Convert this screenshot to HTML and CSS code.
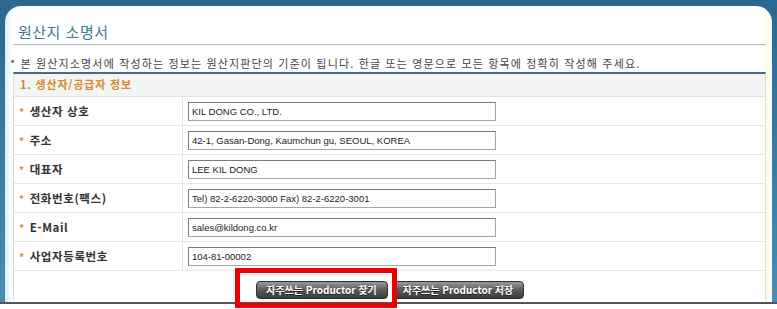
FILE: index.html
```html
<!DOCTYPE html>
<html lang="ko">
  <head>
    <meta charset="UTF-8" />
    <title>원산지 소명서</title>
    <link rel="stylesheet" href="styles.css">
  </head>
  <body>
    <div class="frame">
      <div class="panel">
        <h1 class="title">원산지 소명서</h1>
        <p class="note">* 본 원산지소명서에 작성하는 정보는 원산지판단의 기준이 됩니다. 한글 또는 영문으로 모든 항목에 정확히 작성해 주세요.</p>
        <div class="section">
          <div class="section-head">1. 생산자/공급자 정보</div>
          <div class="row">
            <div class="label"><span class="star">*</span>생산자 상호</div>
            <div class="field"><input type="text" value="KIL DONG CO., LTD." /></div>
          </div>
          <div class="row">
            <div class="label"><span class="star">*</span>주소</div>
            <div class="field"><input type="text" value="42-1, Gasan-Dong, Kaumchun gu, SEOUL, KOREA" /></div>
          </div>
          <div class="row">
            <div class="label"><span class="star">*</span>대표자</div>
            <div class="field"><input type="text" value="LEE KIL DONG" /></div>
          </div>
          <div class="row">
            <div class="label"><span class="star">*</span>전화번호(팩스)</div>
            <div class="field"><input type="text" value="Tel) 82-2-6220-3000 Fax) 82-2-6220-3001" /></div>
          </div>
          <div class="row">
            <div class="label"><span class="star">*</span>E-Mail</div>
            <div class="field"><input type="text" value="sales@kildong.co.kr" /></div>
          </div>
          <div class="row">
            <div class="label"><span class="star">*</span>사업자등록번호</div>
            <div class="field"><input type="text" value="104-81-00002" /></div>
          </div>
          <div class="buttons">
            <button type="button" class="btn">자주쓰는 Productor 찾기</button>
            <button type="button" class="btn">자주쓰는 Productor 저장</button>
          </div>
        </div>
      </div>
    </div>
    <div class="bottom-line"></div>
    <div class="highlight"></div>
  </body>
</html>
```

FILE: styles.css
```css
body {
  margin: 0;
  padding: 0;
  background-color: #fff;
  font-family: "Noto Sans CJK KR", "DejaVu Sans", sans-serif;
  color: #333;
}
.frame {
  background: linear-gradient(#2a6890, #4a8db0);
  padding: 6px 5px 0 5px;
}
.panel {
  background: linear-gradient(to right, #d4eef8 0, #f4fbfd 5px, #fff 8px, #fff 758px, #fdfbe8 762px, #fff 767px);
  border-radius: 16px 16px 0 0;
  padding: 0 6px 0 8px;
  height: 296px;
}
.title {
  margin: 0;
  padding: 17px 0 0 5px;
  height: 21px;
  font-size: 15px;
  font-weight: normal;
  line-height: 18px;
  letter-spacing: 0.5px;
  color: #3b7b8a;
  border-bottom: 1px solid #b3c4c4;
  box-shadow: 0 1px 0 #eef3f3;
}
.note {
  margin: 10px 0 0 -3px;
  height: 17px;
  font-size: 11px;
  line-height: 16px;
  letter-spacing: 1.15px;
  color: #444;
  white-space: nowrap;
}
.section {
  border-top: 2px solid #3f6f7c;
  border-left: 1px solid #dcdcdc;
  border-right: 1px solid #dcdcdc;
}
.section-head {
  height: 22px;
  line-height: 21px;
  padding-left: 6px;
  background-color: #f3f4f4;
  border-bottom: 1px solid #e4e4e4;
  color: #d78a2c;
  font-size: 11px;
  font-weight: bold;
  letter-spacing: 0.8px;
}
.row {
  display: flex;
  height: 28px;
  border-bottom: 1px solid #e6e6e6;
}
.label {
  width: 169px;
  border-right: 1px solid #e6e6e6;
  display: flex;
  align-items: center;
  padding-left: 5px;
  box-sizing: border-box;
  font-size: 11.5px;
  font-weight: bold;
  letter-spacing: 0.6px;
  color: #333;
}
.star {
  color: #e08a3a;
  font-size: 10px;
  margin-right: 5px;
}
.field {
  display: flex;
  align-items: center;
  padding-left: 5px;
}
input[type="text"] {
  width: 308px;
  height: 19px;
  box-sizing: border-box;
  margin: 0;
  padding: 0 3px;
  border: 1px solid #a5a5a5;
  border-top-color: #7b7b7b;
  border-left-color: #7b7b7b;
  font-family: "Liberation Sans", Arial, sans-serif;
  font-size: 9.5px;
  color: #222;
  background: #fff;
}
.buttons {
  display: flex;
  justify-content: center;
  align-items: flex-end;
  gap: 5px;
  height: 28px;
  padding-bottom: 1px;
}
.btn {
  height: 18px;
  padding: 0 6px;
  border: 1px solid #2e2e2e;
  border-radius: 4px;
  background: linear-gradient(#9a9a9a, #5a5a5a 50%, #3c3c3c);
  color: #fff;
  font-family: "Noto Sans CJK KR", "DejaVu Sans", sans-serif;
  font-size: 10px;
  font-weight: bold;
  line-height: 14px;
  text-shadow: 0 1px 0 #222;
  white-space: nowrap;
  cursor: pointer;
}
.btn:first-child {
  width: 132px;
}
.btn:nth-child(2) {
  width: 131px;
}
.bottom-line {
  height: 2px;
  background-color: #555;
  position: absolute;
  top: 302px;
  left: 0;
  right: 0;
}
.highlight {
  position: absolute;
  left: 235px;
  top: 268px;
  width: 152px;
  height: 30px;
  border: 5px solid #ee0000;
  pointer-events: none;
}
```
